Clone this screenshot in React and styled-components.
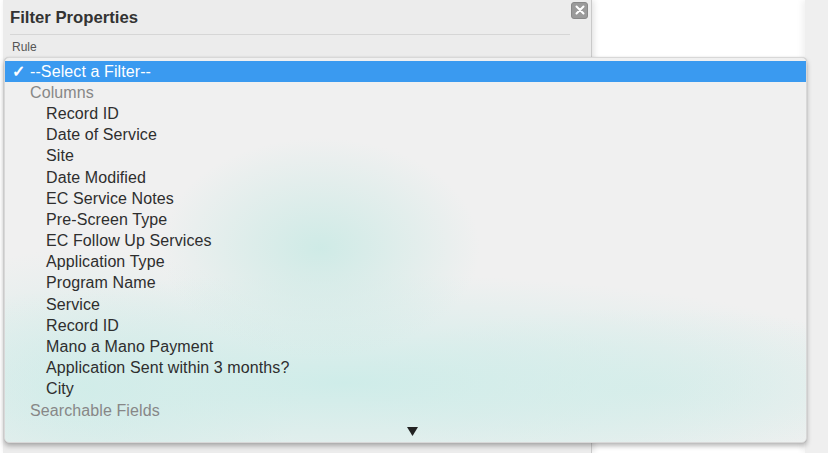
import React from "react";
import styled, { createGlobalStyle } from "styled-components";

const Global = createGlobalStyle`
  html, body { margin: 0; padding: 0; background: #ffffff; }
  body { font-family: "Liberation Sans", Arial, sans-serif; }
`;

const Page = styled.div`
  position: relative;
  width: 828px;
  height: 453px;
  overflow: hidden;
  display: flex;
  background: #ffffff;
`;

const Dialog = styled.div`
  margin-left: 3px;
  width: 589px;
  height: 453px;
  background: #ececec;
  border-right: 1px solid #c9c9c9;
  box-shadow: 2px 0 6px rgba(0, 0, 0, 0.12);
  padding: 0 0 0 7px;
  box-sizing: border-box;
  display: flex;
  flex-direction: column;
`;

const TitleBar = styled.div`
  display: flex;
  align-items: center;
  justify-content: space-between;
  height: 35px;
  width: 560px;
  border-bottom: 1px solid #d6d6d6;
  box-sizing: border-box;
`;

const Title = styled.h2`
  margin: 0;
  font-size: 16.7px;
  font-weight: bold;
  color: #333333;
  padding-top: 2px;
`;

const Close = styled.div`
  width: 17px;
  height: 17px;
  border-radius: 3px;
  background: #9a9a9a;
  border: 1px solid #888888;
  box-sizing: border-box;
  display: flex;
  align-items: center;
  justify-content: center;
  margin-right: -18px;
  margin-top: -14px;
`;

const FieldLabel = styled.div`
  font-size: 12px;
  color: #555555;
  margin: 5px 0 0 2px;
`;

const Spacer = styled.div`
  flex: 1;
`;

const SideStrip = styled.div`
  width: 23px;
  height: 453px;
  background: #efefef;
  box-shadow: -3px 0 6px rgba(0, 0, 0, 0.06);
`;

const Menu = styled.div`
  position: absolute;
  left: 4px;
  top: 57px;
  width: 803px;
  height: 386px;
  border-radius: 5px;
  border: 1px solid #d8d8d8;
  box-sizing: border-box;
  background:
    radial-gradient(ellipse 160px 110px at 315px 190px, rgba(203, 234, 229, 0.9), rgba(203, 234, 229, 0) 100%),
    radial-gradient(ellipse 560px 110px at 340px 325px, rgba(203, 236, 232, 0.9), rgba(203, 236, 232, 0) 100%),
    radial-gradient(ellipse 300px 80px at 640px 330px, rgba(210, 237, 233, 0.6), rgba(210, 237, 233, 0) 100%),
    radial-gradient(ellipse 220px 140px at 80px 330px, rgba(205, 235, 231, 0.7), rgba(205, 235, 231, 0) 100%),
    #f0f0f0;
  box-shadow: 0 3px 5px rgba(0, 0, 0, 0.28), 0 0 1px rgba(0, 0, 0, 0.2);
  padding-top: 3px;
  display: flex;
  flex-direction: column;
`;

const Row = styled.div`
  height: 21.2px;
  display: flex;
  align-items: center;
  font-size: 16px;
  letter-spacing: 0.1px;
  padding-left: ${(p) => p.$indent}px;
  color: ${(p) => (p.$selected ? "#ffffff" : p.$group ? "#878787" : "#2e2e2e")};
  background: ${(p) => (p.$selected ? "#3a9af0" : "transparent")};
  white-space: nowrap;
`;

const Check = styled.span`
  width: 18px;
  margin-left: -18px;
  font-size: 16px;
  font-weight: bold;
`;

const ArrowRow = styled.div`
  flex: 1;
  display: flex;
  align-items: flex-end;
  justify-content: center;
  padding-bottom: 6px;
  padding-left: 14px;
`;

const items = [
  "Record ID",
  "Date of Service",
  "Site",
  "Date Modified",
  "EC Service Notes",
  "Pre-Screen Type",
  "EC Follow Up Services",
  "Application Type",
  "Program Name",
  "Service",
  "Record ID",
  "Mano a Mano Payment",
  "Application Sent within 3 months?",
  "City",
];

export default function App() {
  return (
    <Page>
      <Global />
      <Dialog>
        <TitleBar>
          <Title>Filter Properties</Title>
          <Close>
            <svg width="10" height="10" viewBox="0 0 10 10">
              <path d="M1.5 1.5 L8.5 8.5 M8.5 1.5 L1.5 8.5" stroke="#ffffff" strokeWidth="2" strokeLinecap="round" />
            </svg>
          </Close>
        </TitleBar>
        <FieldLabel>Rule</FieldLabel>
        <Spacer />
      </Dialog>
      <Spacer />
      <SideStrip />
      <Menu>
        <Row $selected $indent={25}>
          <Check>✓</Check>--Select a Filter--
        </Row>
        <Row $group $indent={25}>Columns</Row>
        {items.map((t, i) => (
          <Row key={i} $indent={41}>{t}</Row>
        ))}
        <Row $group $indent={25}>Searchable Fields</Row>
        <ArrowRow>
          <svg width="11" height="9" viewBox="0 0 11 9">
            <path d="M0 0 L11 0 L5.5 9 Z" fill="#222222" />
          </svg>
        </ArrowRow>
      </Menu>
    </Page>
  );
}
